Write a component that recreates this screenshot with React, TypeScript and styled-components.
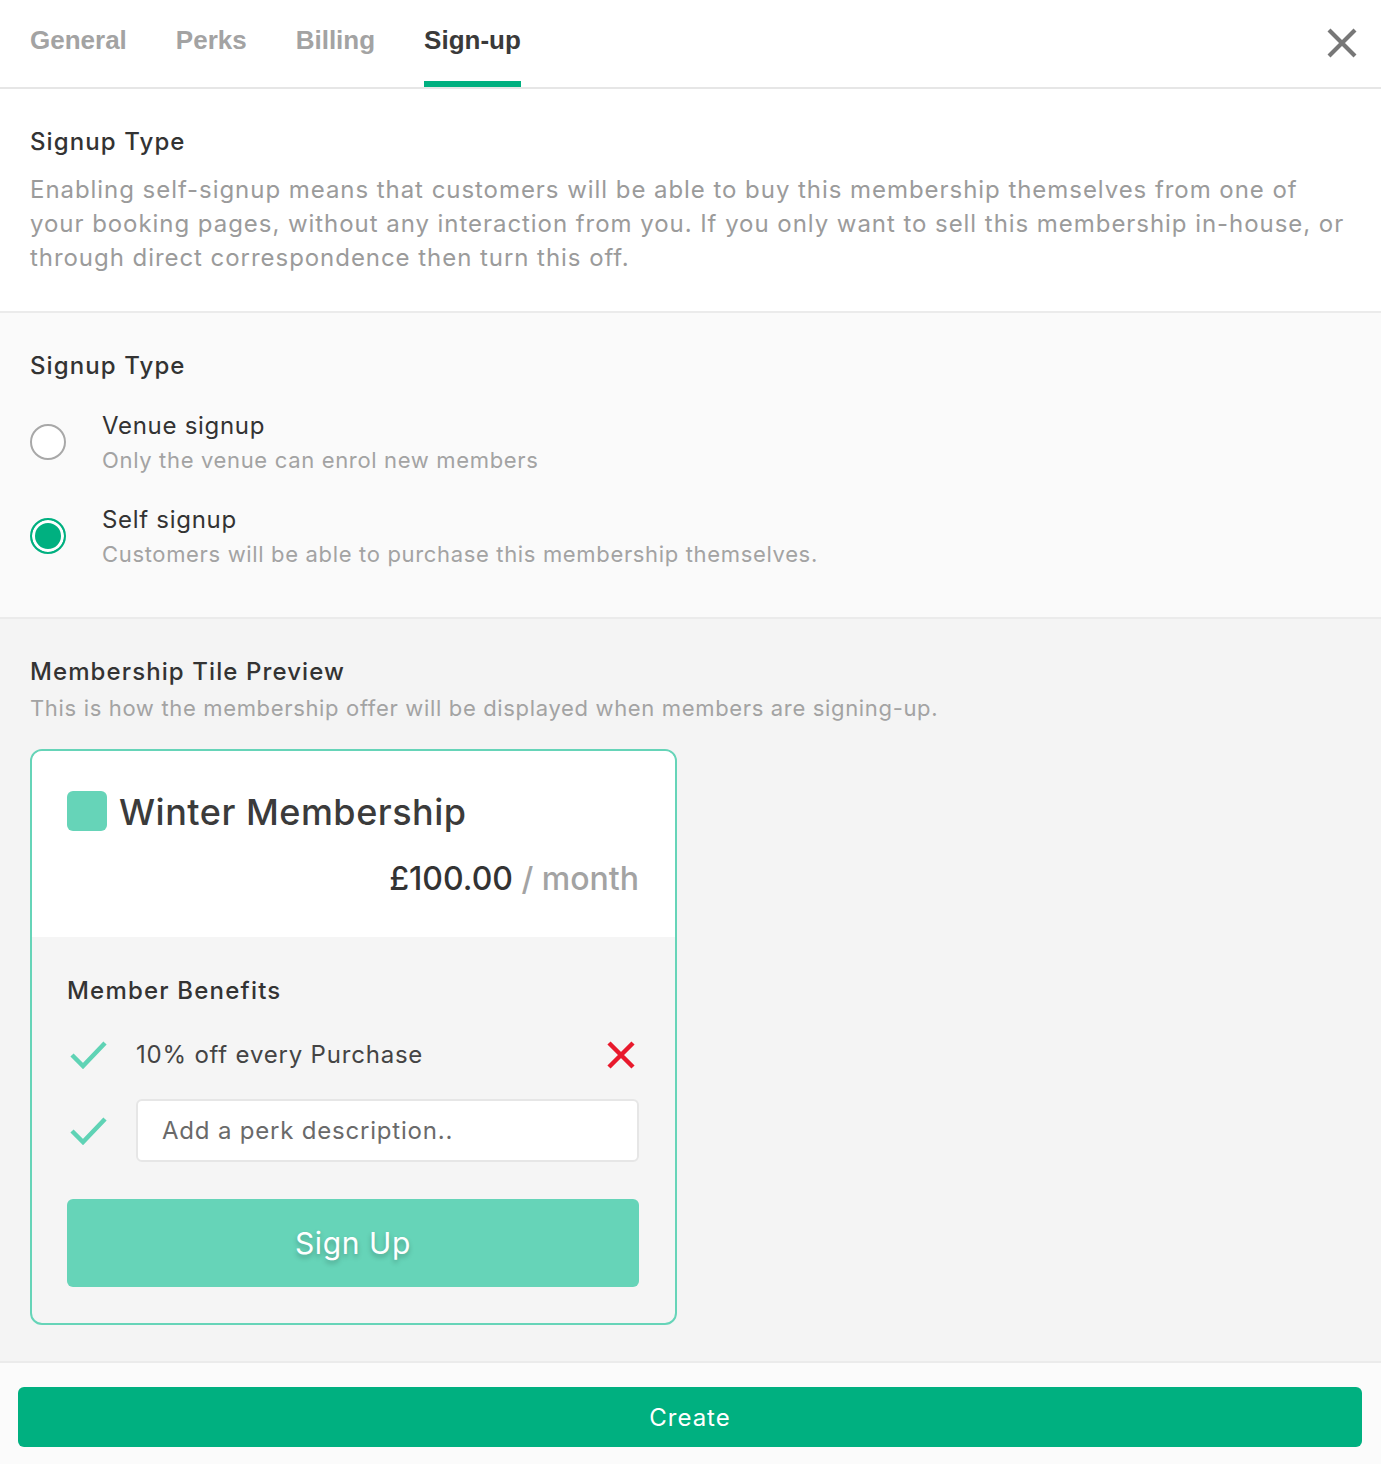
import React from "react";
import styled, { createGlobalStyle } from "styled-components";

const Global = createGlobalStyle`
  html, body { margin: 0; padding: 0; background: #ffffff; }
  body { font-family: Inter, "Noto Sans", sans-serif; color: #333; }
  * { box-sizing: border-box; }
`;

const Page = styled.div`
  width: 1381px;
  display: flex;
  flex-direction: column;
`;

const Header = styled.header`
  height: 89px;
  border-bottom: 2px solid #e6e6e6;
  display: flex;
  align-items: stretch;
  justify-content: space-between;
  padding: 0 24px 0 30px;
`;

const Tabs = styled.nav`
  display: flex;
  gap: 49px;
`;

const Tab = styled.div<{ $active?: boolean }>`
  font-family: "Liberation Sans", Arial, sans-serif;
  font-weight: 700;
  font-size: 26px;
  line-height: 30px;
  padding-top: 25px;
  color: ${(p) => (p.$active ? "#3a3a3a" : "#a3a3a3")};
  border-bottom: 6px solid ${(p) => (p.$active ? "#00b080" : "transparent")};
  height: 87px;
`;

const CloseButton = styled.button`
  border: 0;
  background: none;
  padding: 0;
  margin-top: 28px;
  width: 30px;
  height: 30px;
  cursor: pointer;
  display: flex;
`;

const Section = styled.section<{ $bg: string; $pb?: number }>`
  background: ${(p) => p.$bg};
  padding: 36px 30px ${(p) => p.$pb ?? 36}px 30px;
  border-bottom: 2px solid #ebebeb;
`;

const Title = styled.h3`
  margin: 0;
  font-size: 24px;
  line-height: 34px;
  font-weight: 500;
  letter-spacing: 1.1px;
  color: #333;
`;

const Desc = styled.p`
  margin: 14px 0 0;
  font-size: 24px;
  line-height: 34px;
  letter-spacing: 0.95px;
  color: #9b9b9b;
  font-weight: 400;
  max-width: 1318px;
`;

const SubDesc = styled.p`
  margin: 4px 0 0;
  font-size: 22px;
  line-height: 30px;
  letter-spacing: 0.66px;
  color: #a3a3a3;
`;

const RadioList = styled.div`
  margin-top: 26px;
  display: flex;
  flex-direction: column;
  gap: 28px;
`;

const RadioRow = styled.label`
  display: flex;
  align-items: center;
  gap: 36px;
`;

const RadioCircle = styled.span<{ $checked?: boolean }>`
  width: 36px;
  height: 36px;
  border-radius: 50%;
  border: 2px solid ${(p) => (p.$checked ? "#00b080" : "#a8a8a8")};
  background: ${(p) => (p.$checked ? "#00b080" : "#fff")};
  box-shadow: ${(p) => (p.$checked ? "inset 0 0 0 3px #fff" : "none")};
  flex: none;
`;

const RadioText = styled.div`
  display: flex;
  flex-direction: column;
`;

const RadioLabel = styled.div`
  font-size: 24px;
  line-height: 34px;
  letter-spacing: 0.7px;
  color: #333;
`;

const RadioHint = styled.div`
  font-size: 22px;
  line-height: 30px;
  letter-spacing: 0.66px;
  color: #a3a3a3;
  margin-top: 2px;
`;

const Card = styled.div`
  margin-top: 26px;
  width: 647px;
  border: 2px solid #66d4b8;
  border-radius: 12px;
  overflow: hidden;
  background: #f5f5f5;
`;

const CardTop = styled.div`
  background: #fff;
  padding: 39px 36px 38px 35px;
  display: flex;
  flex-direction: column;
`;

const CardTitleRow = styled.div`
  display: flex;
  align-items: center;
  gap: 12px;
`;

const Swatch = styled.span`
  width: 40px;
  height: 40px;
  border-radius: 6px;
  background: #66d4b8;
  flex: none;
`;

const CardTitle = styled.div`
  font-size: 36px;
  line-height: 42px;
  font-weight: 500;
  letter-spacing: 0.5px;
  color: #3b3b3b;
  transform: translateY(1px);
`;

const Price = styled.div`
  margin-top: 27px;
  text-align: right;
  font-size: 32px;
  line-height: 40px;
  font-weight: 500;
  color: #333;
`;

const Per = styled.span`
  color: #a3a3a3;
`;

const CardBottom = styled.div`
  padding: 37px 36px 36px 35px;
  display: flex;
  flex-direction: column;
`;

const BenefitsTitle = styled.div`
  font-size: 24px;
  line-height: 34px;
  font-weight: 500;
  letter-spacing: 1.2px;
  color: #333;
`;

const PerkRow = styled.div<{ $mt: number }>`
  margin-top: ${(p) => p.$mt}px;
  display: flex;
  align-items: center;
  min-height: 44px;
`;

const CheckWrap = styled.span`
  width: 69px;
  flex: none;
  display: flex;
  padding-left: 3px;
`;

const PerkText = styled.div`
  flex: 1;
  font-size: 24px;
  line-height: 34px;
  letter-spacing: 0.8px;
  color: #444;
`;

const PerkInput = styled.input`
  flex: 1;
  height: 63px;
  border: 2px solid #e6e6e6;
  border-radius: 6px;
  background: #fff;
  padding: 0 24px;
  font-family: Inter, "Noto Sans", sans-serif;
  font-size: 24px;
  letter-spacing: 0.8px;
  color: #333;
  outline: none;
  &::placeholder { color: #6a6a6a; }
`;

const RemoveButton = styled.button`
  border: 0;
  background: none;
  padding: 0;
  margin-right: 4px;
  width: 28px;
  height: 28px;
  display: flex;
`;

const SignUpButton = styled.button`
  margin-top: 37px;
  height: 88px;
  border: 0;
  border-radius: 6px;
  background: #66d4b8;
  color: #fff;
  font-family: Inter, "Noto Sans", sans-serif;
  font-size: 30px;
  font-weight: 400;
  letter-spacing: 0.6px;
  text-shadow: 0 3px 5px rgba(0, 0, 0, 0.25);
`;

const Footer = styled.footer`
  background: #fbfbfb;
  padding: 24px 19px 17px 18px;
`;

const CreateButton = styled.button`
  width: 100%;
  height: 60px;
  border: 0;
  border-radius: 6px;
  background: #00b080;
  color: #fff;
  font-family: Inter, "Noto Sans", sans-serif;
  font-size: 24px;
  font-weight: 400;
  letter-spacing: 1px;
`;

const Check = () => (
  <svg width="38" height="28" viewBox="0 0 38 28" fill="none">
    <path d="M2 14 L13 25 L35 2" stroke="#5fd3b5" strokeWidth="4.5" strokeLinejoin="miter" />
  </svg>
);

export default function App() {
  return (
    <Page>
      <Global />
      <Header>
        <Tabs>
          <Tab>General</Tab>
          <Tab>Perks</Tab>
          <Tab>Billing</Tab>
          <Tab $active>Sign-up</Tab>
        </Tabs>
        <CloseButton aria-label="Close">
          <svg width="30" height="30" viewBox="0 0 30 30">
            <path d="M2 2 L28 28 M28 2 L2 28" stroke="#777" strokeWidth="4.2" />
          </svg>
        </CloseButton>
      </Header>

      <Section $bg="#ffffff">
        <Title>Signup Type</Title>
        <Desc>
          Enabling self-signup means that customers will be able to buy this membership themselves from one of
          your booking pages, without any interaction from you. If you only want to sell this membership in-house, or
          through direct correspondence then turn this off.
        </Desc>
      </Section>

      <Section $bg="#fafafa" $pb={48}>
        <Title>Signup Type</Title>
        <RadioList>
          <RadioRow>
            <RadioCircle />
            <RadioText>
              <RadioLabel>Venue signup</RadioLabel>
              <RadioHint>Only the venue can enrol new members</RadioHint>
            </RadioText>
          </RadioRow>
          <RadioRow>
            <RadioCircle $checked />
            <RadioText>
              <RadioLabel>Self signup</RadioLabel>
              <RadioHint>Customers will be able to purchase this membership themselves.</RadioHint>
            </RadioText>
          </RadioRow>
        </RadioList>
      </Section>

      <Section $bg="#f4f4f4">
        <Title>Membership Tile Preview</Title>
        <SubDesc>This is how the membership offer will be displayed when members are signing-up.</SubDesc>
        <Card>
          <CardTop>
            <CardTitleRow>
              <Swatch />
              <CardTitle>Winter Membership</CardTitle>
            </CardTitleRow>
            <Price>
              £100.00 <Per>/ month</Per>
            </Price>
          </CardTop>
          <CardBottom>
            <BenefitsTitle>Member Benefits</BenefitsTitle>
            <PerkRow $mt={25}>
              <CheckWrap>
                <Check />
              </CheckWrap>
              <PerkText>10% off every Purchase</PerkText>
              <RemoveButton aria-label="Remove">
                <svg width="28" height="28" viewBox="0 0 28 28">
                  <path d="M2 2 L26 26 M26 2 L2 26" stroke="#e8192c" strokeWidth="4.5" />
                </svg>
              </RemoveButton>
            </PerkRow>
            <PerkRow $mt={22}>
              <CheckWrap>
                <Check />
              </CheckWrap>
              <PerkInput placeholder="Add a perk description.." />
            </PerkRow>
            <SignUpButton>Sign Up</SignUpButton>
          </CardBottom>
        </Card>
      </Section>

      <Footer>
        <CreateButton>Create</CreateButton>
      </Footer>
    </Page>
  );
}
